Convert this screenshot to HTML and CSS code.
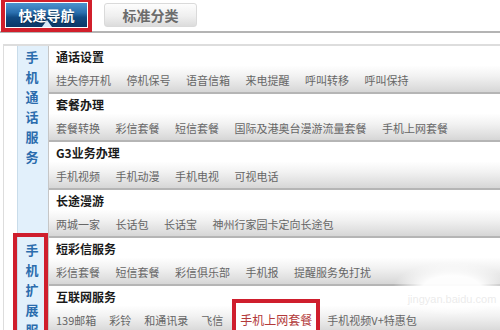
FILE: index.html
```html
<!DOCTYPE html>
<html lang="zh-CN">
<head>
<meta charset="utf-8">
<title>快速导航</title>
<link rel="stylesheet" href="styles.css">
</head>
<body>
<div class="page">
  <div class="tabs">
    <div class="tab tab-active">快速导航<span class="tab-arrow"></span></div>
    <div class="tab tab-normal">标准分类</div>
  </div>
  <div class="panel">
    <div class="group">
      <div class="side">
        <span>手</span><span>机</span><span>通</span><span>话</span><span>服</span><span>务</span>
      </div>
      <div class="sections">
        <div class="sec">
          <div class="sec-title">通话设置</div>
          <div class="links"><span>挂失停开机</span><span>停机保号</span><span>语音信箱</span><span>来电提醒</span><span>呼叫转移</span><span>呼叫保持</span></div>
        </div>
        <div class="sec">
          <div class="sec-title">套餐办理</div>
          <div class="links"><span>套餐转换</span><span>彩信套餐</span><span>短信套餐</span><span>国际及港奥台漫游流量套餐</span><span>手机上网套餐</span></div>
        </div>
        <div class="sec">
          <div class="sec-title">G3业务办理</div>
          <div class="links"><span>手机视频</span><span>手机动漫</span><span>手机电视</span><span>可视电话</span></div>
        </div>
        <div class="sec">
          <div class="sec-title">长途漫游</div>
          <div class="links"><span>两城一家</span><span>长话包</span><span>长话宝</span><span>神州行家园卡定向长途包</span></div>
        </div>
      </div>
    </div>
    <div class="group">
      <div class="side side-marked">
        <span>手</span><span>机</span><span>扩</span><span>展</span><span>服</span><span>务</span>
      </div>
      <div class="sections">
        <div class="sec">
          <div class="sec-title">短彩信服务</div>
          <div class="links"><span>彩信套餐</span><span>短信套餐</span><span>彩信俱乐部</span><span>手机报</span><span>提醒服务免打扰</span></div>
        </div>
        <div class="sec">
          <div class="sec-title">互联网服务</div>
          <div class="links links-tight"><span>139邮箱</span><span>彩铃</span><span>和通讯录</span><span>飞信</span><span class="link-marked">手机上网套餐</span><span>手机视频V+特惠包</span></div>
        </div>
      </div>
    </div>
  </div>
  <div class="watermark">jingyan.baidu.com</div>
</div>
</body>
</html>
```

FILE: styles.css
```css
html, body {
  margin: 0;
  padding: 0;
  background: #fff;
}
body {
  font-family: "Noto Sans CJK SC", "Noto Sans", sans-serif;
  overflow: hidden;
  width: 500px;
  height: 330px;
}
.page {
  position: relative;
  width: 500px;
  height: 330px;
  overflow: hidden;
}
.tabs {
  display: flex;
  gap: 17px;
  height: 24px;
  padding: 3px 0 4px 6px;
  border-bottom: 2px solid #b4b4b4;
}
.tab {
  position: relative;
  height: 24px;
  line-height: 24px;
  font-size: 14px;
  font-weight: bold;
  text-align: center;
  box-sizing: border-box;
}
.tab-active {
  width: 81px;
  color: #fff;
  background: linear-gradient(180deg, #4d93cf 0%, #2a6fae 40%, #114a82 60%, #0b3766 100%);
  outline: 4px solid #d11f2b;
  outline-offset: 1px;
  text-shadow: 0 1px 1px rgba(0, 0, 0, 0.4);
}
.tab-arrow {
  position: absolute;
  left: 36px;
  bottom: 0;
  width: 0;
  height: 0;
  border-left: 5px solid transparent;
  border-right: 5px solid transparent;
  border-bottom: 7px solid #d6e8f7;
}
.tab-normal {
  width: 93px;
  color: #6c6c6c;
  background: linear-gradient(180deg, #fdfdfd 0%, #efefef 55%, #dcdcdc 100%);
  border: 1px solid #dadada;
  border-radius: 3px;
  line-height: 22px;
}
.panel {
  margin: 11px 0 0 3px;
  border-top: 2px solid #dddddd;
  border-left: 1px solid #dddddd;
  padding-left: 13px;
}
.group {
  display: flex;
}
.side {
  position: relative;
  width: 32px;
  box-sizing: border-box;
  background: #e2f0fb;
  border-left: 1px solid #c9dcea;
  border-right: 1px solid #c6c6c6;
  padding: 1px 2px 0 0;
  display: flex;
  flex-direction: column;
  align-items: center;
  color: #2b6cad;
  font-size: 13px;
  font-weight: bold;
  line-height: 20px;
}
.side-marked {
  padding-top: 2px;
}
.side-marked::after {
  content: "";
  position: absolute;
  left: -5px;
  right: 0;
  top: -5px;
  bottom: -12px;
  border: 4px solid #cf1e2d;
}
.sections {
  flex: 1;
}
.sec {
  height: 46px;
  border-bottom: 2px solid #b5b5b5;
  padding-left: 7px;
  background: linear-gradient(180deg, #ffffff 0%, #ffffff 42%, #f2f2f2 65%, #e0e0e0 88%, #d6d6d6 100%);
}
.sec-title {
  padding-top: 2px;
  height: 18px;
  line-height: 18px;
  font-size: 12px;
  font-weight: bold;
  color: #1a1a1a;
}
.links {
  display: flex;
  align-items: center;
  gap: 15.5px;
  margin-top: 3px;
  height: 22px;
  font-size: 11px;
  color: #666;
  white-space: nowrap;
}
.links-tight {
  gap: 13px;
}
.link-marked {
  margin: -10px -6px -10px -4px;
  padding: 6px 4px;
  font-size: 12px;
  line-height: 22px;
  border: 4px solid #cf1e2d;
  background: #fff;
  color: #b33a3a;
}
.watermark {
  position: absolute;
  left: 392px;
  top: 262px;
  width: 120px;
  height: 54px;
  line-height: 74px;
  text-align: center;
  font-family: "Liberation Sans", sans-serif;
  font-size: 11px;
  color: rgba(215, 215, 215, 0.5);
  background: radial-gradient(ellipse at center, rgba(255, 255, 255, 0.95) 35%, rgba(255, 255, 255, 0) 70%);
}
```
